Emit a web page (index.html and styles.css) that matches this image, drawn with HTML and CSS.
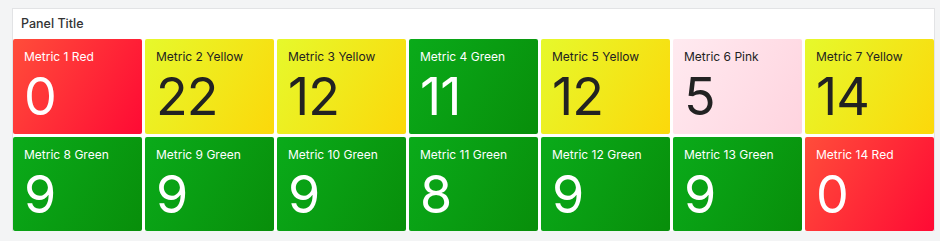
FILE: index.html
```html
<!DOCTYPE html>
<html>
<head>
  <meta charset="utf-8" />
  <title>Panel Title</title>
  <link rel="stylesheet" href="styles.css">
</head>
<body>

  <div class="panel">
    <div class="panelTitle">Panel Title</div>

    <div class="tiles">
      <div class="tile red"><div class="label">Metric 1 Red</div><div class="value">0</div></div>
      <div class="tile yellow"><div class="label">Metric 2 Yellow</div><div class="value">22</div></div>
      <div class="tile yellow"><div class="label">Metric 3 Yellow</div><div class="value">12</div></div>
      <div class="tile green"><div class="label">Metric 4 Green</div><div class="value">11</div></div>
      <div class="tile yellow"><div class="label">Metric 5 Yellow</div><div class="value">12</div></div>
      <div class="tile pink"><div class="label">Metric 6 Pink</div><div class="value">5</div></div>
      <div class="tile yellow"><div class="label">Metric 7 Yellow</div><div class="value">14</div></div>

      <div class="tile green"><div class="label">Metric 8 Green</div><div class="value">9</div></div>
      <div class="tile green"><div class="label">Metric 9 Green</div><div class="value">9</div></div>
      <div class="tile green"><div class="label">Metric 10 Green</div><div class="value">9</div></div>
      <div class="tile green"><div class="label">Metric 11 Green</div><div class="value">8</div></div>
      <div class="tile green"><div class="label">Metric 12 Green</div><div class="value">9</div></div>
      <div class="tile green"><div class="label">Metric 13 Green</div><div class="value">9</div></div>
      <div class="tile red"><div class="label">Metric 14 Red</div><div class="value">0</div></div>
    </div>

    <div class="handle"></div>
  </div>

</body>
</html>
```

FILE: styles.css
```css
body
{
  margin: 0;
  padding: 8px 5px 0 12px;
  background-color: #f3f4f5;
  font-family: Inter, Roboto, 'Liberation Sans', sans-serif;
}

.panel
{
  width: 921px;
  background-color: #fff;
  border: 1px solid #e2e3e5;
  border-bottom: none;
  position: relative;
}

.panelTitle
{
  height: 30px;
  line-height: 30px;
  padding-left: 8px;
  font-size: 12.5px;
  font-weight: 500;
  color: #333;
}

.tiles
{
  display: grid;
  grid-template-columns: repeat(7, 1fr);
  grid-template-rows: 95px 94px;
  gap: 3px;
}

.tile
{
  border-radius: 2px;
  padding: 10px 11px 0 11px;
  color: #fff;
}

.label
{
  font-size: 12px;
  line-height: 16px;
}

.value
{
  font-size: 52px;
  line-height: 1;
  margin-top: 6px;
  letter-spacing: -1px;
}

.red
{
  background: linear-gradient(120deg, #ff4d3a, #ff0a34);
}

.yellow
{
  background: linear-gradient(120deg, #e6f92c, #fcd80a);
  color: #222;
}

.green
{
  background: linear-gradient(120deg, #0aab1a, #088e0a);
}

.pink
{
  background: linear-gradient(120deg, #ffeaf0, #ffd4df);
  color: #222;
}

.handle
{
  position: absolute;
  left: 361px;
  bottom: -3px;
  width: 184px;
  height: 3px;
  border-radius: 2px;
  background-color: #d0d1d3;
}
```
